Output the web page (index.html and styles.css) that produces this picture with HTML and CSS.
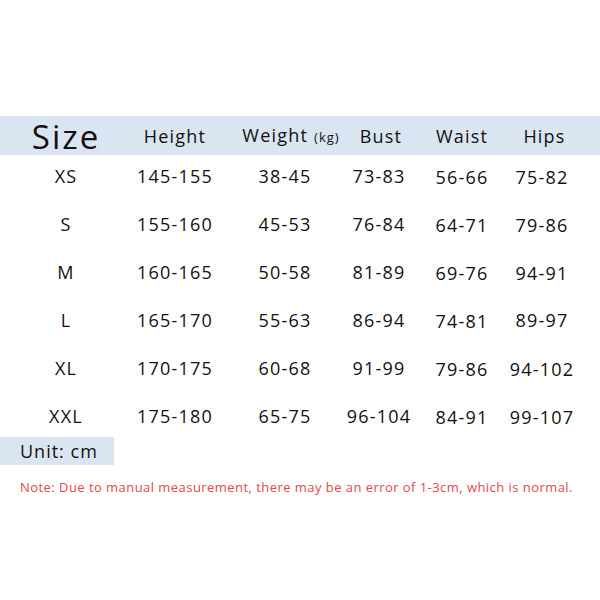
FILE: index.html
```html
<!DOCTYPE html>
<html>
<head>
<meta charset="utf-8">
<link rel="stylesheet" href="styles.css">
</head>
<body>
<div class="chart">
  <div class="head grid">
    <div class="cell size-h">Size</div>
    <div class="cell">Height</div>
    <div class="cell weight-h">Weight<span class="kg">(kg)</span></div>
    <div class="cell bust-h">Bust</div>
    <div class="cell">Waist</div>
    <div class="cell hips-h">Hips</div>
  </div>
  <div class="body grid">
    <div class="cell">XS</div><div class="cell">145-155</div><div class="cell">38-45</div><div class="cell">73-83</div><div class="cell low">56-66</div><div class="cell low">75-82</div>
    <div class="cell">S</div><div class="cell">155-160</div><div class="cell">45-53</div><div class="cell">76-84</div><div class="cell low">64-71</div><div class="cell low">79-86</div>
    <div class="cell">M</div><div class="cell">160-165</div><div class="cell">50-58</div><div class="cell">81-89</div><div class="cell low">69-76</div><div class="cell low">94-91</div>
    <div class="cell">L</div><div class="cell">165-170</div><div class="cell">55-63</div><div class="cell">86-94</div><div class="cell low">74-81</div><div class="cell">89-97</div>
    <div class="cell">XL</div><div class="cell">170-175</div><div class="cell">60-68</div><div class="cell">91-99</div><div class="cell low">79-86</div><div class="cell low">94-102</div>
    <div class="cell">XXL</div><div class="cell">175-180</div><div class="cell">65-75</div><div class="cell">96-104</div><div class="cell low">84-91</div><div class="cell low">99-107</div>
  </div>
  <div class="unit">Unit: cm</div>
  <p class="note">Note: Due to manual measurement, there may be an error of 1-3cm, which is normal.</p>
</div>
</body>
</html>
```
FILE: styles.css
```css
html, body {
  margin: 0;
  padding: 0;
  background: #ffffff;
}
body {
  width: 600px;
  height: 600px;
  font-family: "Open Sans", "DejaVu Sans", sans-serif;
  font-weight: 500;
  color: #111111;
}
.chart {
  padding-top: 116px;
}
.grid {
  display: grid;
  grid-template-columns: 132px 86px 134px 54px 112px 48px;
}
.cell {
  display: flex;
  justify-content: center;
  white-space: nowrap;
  font-size: 18px;
  letter-spacing: 1.2px;
}
.head {
  background: #dbe5f1;
  height: 39px;
  align-items: center;
}
.head .cell {
  line-height: 39px;
  align-items: baseline;
}
.size-h {
  font-size: 33px;
  letter-spacing: 2px;
  font-weight: 400;
}
.weight-h {
  padding-left: 12px;
}
.bust-h {
  padding-left: 4px;
}
.hips-h {
  padding-left: 5px;
}
.kg {
  font-size: 13px;
  letter-spacing: 1px;
  margin-left: 6px;
}
.body {
  grid-auto-rows: 42px;
  row-gap: 6px;
}
.body .cell {
  line-height: 42px;
}
.body .low {
  padding-top: 3px;
  line-height: 39px;
}
.unit {
  width: 114px;
  height: 28px;
  line-height: 28px;
  background: #dbe5f1;
  box-sizing: border-box;
  padding-left: 20px;
  font-size: 18px;
  letter-spacing: 1px;
}
.note {
  margin: 12px 0 0 20px;
  line-height: 20px;
  font-size: 13px;
  font-weight: 400;
  letter-spacing: 0.45px;
  color: #e5474b;
  white-space: nowrap;
}
```
